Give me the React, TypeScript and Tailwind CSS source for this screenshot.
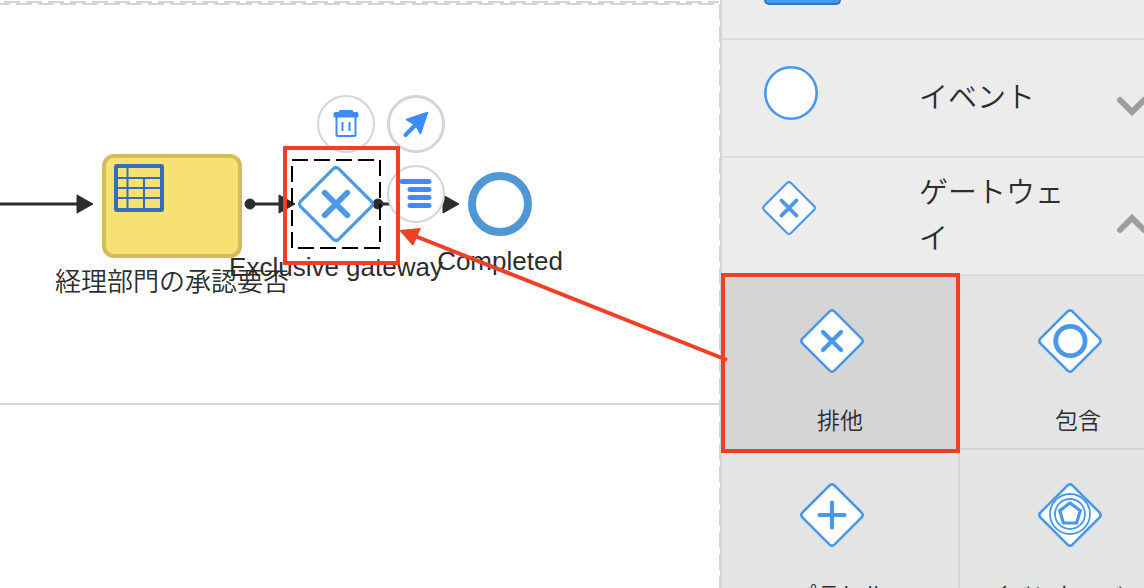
import type { ReactNode } from "react";

const BLUE = "#4a98ea";

function Diamond({ size, pad = 0, children }: { size: number; pad?: number; children?: ReactNode }) {
  return (
    <svg width={size + pad} height={size} viewBox={`0 0 ${64 * ((size + pad) / size)} 64`} fill="none" stroke={BLUE} aria-hidden="true">
      <path d="M29.6 2.4Q32 .2 34.4 2.4L61.6 29.6Q63.8 32 61.6 34.4L34.4 61.6Q32 63.8 29.6 61.6L2.4 34.4Q.2 32 2.4 29.6Z" fill="#fff" strokeWidth="2.6" />
      {children}
    </svg>
  );
}

function Cross({ reach }: { reach: number }) {
  const a = 32 - reach;
  const b = 32 + reach;
  return <path d={`M${a} ${a}L${b} ${b}M${b} ${a}L${a} ${b}`} strokeWidth="4.4" strokeLinecap="round" />;
}

function Chevron({ up = false }: { up?: boolean }) {
  return (
    <svg width="32" height="24" viewBox="0 0 32 24" fill="none" stroke="#9e9e9e" strokeWidth="6" strokeLinecap="round" aria-hidden="true">
      <path d={up ? "M4 18 16 6 28 18" : "M4 6 16 18 28 6"} />
    </svg>
  );
}

function Section({ icon, title, open }: { icon: ReactNode; title: string; open?: boolean }) {
  return (
    <button type="button" aria-expanded={!!open} className="flex h-[118px] w-[476px] items-center border-b-2 border-[#dcdcdc] bg-[#ececec] pl-10 text-left">
      <span className="w-[157px] shrink-0 pb-4">{icon}</span>
      <span className="w-[160px] shrink-0 text-[29px] leading-[46px] font-[350]">{title}</span>
      <span className="ml-[37px] shrink-0 pt-4">
        <Chevron up={open} />
      </span>
    </button>
  );
}

function Tile({ label, selected, children }: { label: string; selected?: boolean; children: ReactNode }) {
  return (
    <button
      type="button"
      className={`flex h-[174px] flex-col items-center border-r-2 border-b-2 border-[#d5d5d5] pt-[33px] ${selected ? "bg-[#d5d5d5]" : "bg-[#e4e4e4]"}`}
    >
      <Diamond size={64} pad={16}>
        {children}
      </Diamond>
      <span className="mt-8 text-[23px] leading-8 font-[350] whitespace-nowrap">{label}</span>
    </button>
  );
}

function Palette() {
  return (
    <aside aria-label="パレット" className="w-[424px] shrink-0 overflow-hidden border-l-2 border-[#d5d5d5] bg-[#e4e4e4]">
      <div className="h-10 w-[476px] border-b-2 border-[#dcdcdc] bg-[#ececec] pl-[42px]">
        <div className="h-[5px] w-[77px] rounded-b-md border-2 border-t-0 border-[#3374cb] bg-[#4a98ea]" />
      </div>
      <Section
        title="イベント"
        icon={
          <svg className="ml-[2px] block" width="54" height="60" viewBox="0 0 54 60" aria-hidden="true">
            <circle cx="27" cy="33" r="25.7" fill="#fff" stroke={BLUE} strokeWidth="2.6" />
          </svg>
        }
      />
      <Section
        title="ゲートウェイ"
        open
        icon={
          <Diamond size={54}>
            <Cross reach={9} />
          </Diamond>
        }
      />
      <div className="grid w-[476px] grid-cols-2">
        <Tile label="排他" selected>
          <Cross reach={9} />
        </Tile>
        <Tile label="包含">
          <circle cx="32.400" cy="32" r="14.700" strokeWidth="4.800" />
        </Tile>
        <Tile label="パラレル">
          <path d="M32 19.5v25M19.5 32h25" strokeWidth="4.2" strokeLinecap="round" />
        </Tile>
        <Tile label="イベント・ベース">
          <circle cx="32" cy="31" r="20" strokeWidth="1.8" />
          <circle cx="32" cy="31" r="15" strokeWidth="1.8" />
          <path d="M32 20 42.3 27.6 38.6 40H25.4L21.7 27.6Z" strokeWidth="3.2" />
        </Tile>
      </div>
    </aside>
  );
}

function Connectors() {
  return (
    <svg className="absolute inset-0 size-full" aria-hidden="true">
      <g fill="none" stroke="#d5d5d5" strokeWidth="2">
        <path d="M4 2H719" strokeDasharray="16 6" />
        <path d="M-6 4H719" strokeDasharray="16 6" />
        <path d="M0 404H720" />
      </g>
      <g stroke="#2d2d2d" strokeWidth="3">
        <path d="M0 204H80M250 204H282M378 204H446" />
      </g>
      <g fill="#2d2d2d" stroke="#2d2d2d" strokeLinejoin="round">
        <path d="M77 195v18l16-9ZM279 195v18l16-9ZM443 195v18l16-9Z" />
        <circle cx="250" cy="204" r="5" />
        <circle cx="378" cy="204" r="5" />
      </g>
    </svg>
  );
}

function NodeLabel({ className, children }: { className: string; children: ReactNode }) {
  return <span className={`absolute -translate-x-1/2 text-[26px] leading-8 whitespace-nowrap ${className}`}>{children}</span>;
}

function Diagram() {
  return (
    <section aria-label="ダイアグラム" className="relative min-w-0 flex-1 overflow-hidden bg-white">
      <Connectors />
      <svg className="absolute inset-y-0 right-0 h-full w-px" aria-hidden="true">
        <path d="M.5 4V2000" stroke="#d5d5d5" strokeWidth="1" strokeDasharray="16 6" />
      </svg>

      <div className="absolute top-[154px] left-[102px] h-[104px] w-[140px] rounded-[12px] border-4 border-[#d4bc5a] bg-[#f6e172] p-2 pt-[6px]">
        <svg width="50" height="48" viewBox="0 0 50 48" fill="none" stroke="#356eb8" aria-hidden="true">
          <rect x="2" y="2" width="46" height="44" rx="1" strokeWidth="4" />
          <path d="M13.500 3v42M30 14v31M3 14h44M3 24h44M3 34h44" strokeWidth="2" />
        </svg>
      </div>
      <NodeLabel className="top-[266px] left-[172px] font-[350]">経理部門の承認要否</NodeLabel>

      <div className="absolute top-[166px] left-[298px]">
        <Diamond size={76}>
          <path d="M22.5 22.5 41.5 41.5M41.5 22.5 22.5 41.5" strokeWidth="4.8" strokeLinecap="round" />
        </Diamond>
      </div>
      <NodeLabel className="top-[251px] left-[336px]">Exclusive gateway</NodeLabel>
      <svg className="absolute top-[159px] left-[291px]" width="90" height="90" fill="none" aria-hidden="true">
        <path d="M1 1H89V89H1Z" stroke="#000" strokeWidth="2" strokeDasharray="16 6" />
      </svg>

      <div className="absolute top-[172px] left-[468px] size-16 rounded-full border-8 border-[#5097d5] bg-white" />
      <NodeLabel className="top-[245px] left-[500px]">Completed</NodeLabel>

      <button type="button" aria-label="削除" className="absolute top-[95px] left-[317px] grid size-[58px] place-items-center rounded-full border-2 border-[#d5d5d9] bg-white">
        <svg width="26" height="28" viewBox="0 0 26 28" fill="#3d8bfb" aria-hidden="true">
          <path d="M6 1Q6 0 7 0H19Q20 0 20 1V2H23.500Q25.500 2 25.500 4V6Q25.500 7.500 24 7.500H2Q.5 7.500 .5 6V4Q.5 2 2.500 2H6Z" />
          <path d="M3.500 7V24.500Q3.500 26 5 26H21Q22.500 26 22.500 24.500V7" fill="none" stroke="#3d8bfb" strokeWidth="2" />
          <path d="M9.500 12v9M16.500 12v9" stroke="#3d8bfb" strokeWidth="2" />
        </svg>
      </button>
      <button type="button" aria-label="接続" className="absolute top-[95px] left-[387px] grid size-[58px] place-items-center rounded-full border-[3px] border-[#d5d5d5] bg-white">
        <svg width="26" height="26" viewBox="0 0 26 26" fill="#3d8bfb" stroke="#3d8bfb" strokeLinejoin="round" aria-hidden="true">
          <path d="M24.500 1.500 17.500 22.500 12.500 14 3.500 8.500Z" strokeWidth="1.500" />
          <path d="M14 12.500 2.500 24" strokeWidth="4" strokeLinecap="round" />
        </svg>
      </button>
      <button type="button" aria-label="メニュー" className="absolute top-[165px] left-[387px] grid size-[58px] place-items-center rounded-full border-2 border-[#d5d5d9] bg-white">
        <svg width="34" height="30" viewBox="0 0 34 30" stroke="#3d8bfb" strokeWidth="5" strokeLinecap="round" aria-hidden="true">
          <path d="M3 2.500H30M11 10.500H30M11 18.500H30M11 26.500H30" />
        </svg>
      </button>
    </section>
  );
}

function Annotations() {
  return (
    <div className="pointer-events-none absolute inset-0 overflow-hidden" aria-hidden="true">
      <div className="absolute top-[146px] left-[283px] h-[119px] w-[117px] border-4 border-[#ee4026]" />
      <div className="absolute top-[273px] right-[184px] h-[180px] w-[239px] border-4 border-[#ee4026]" />
      <svg className="absolute inset-0 size-full">
        <path d="M727 360 415 236" stroke="#ee4026" strokeWidth="4" />
        <path d="M399 230 421 228 413 246Z" fill="#ee4026" />
      </svg>
    </div>
  );
}

export default function App() {
  return (
    <main className="relative flex h-screen overflow-hidden bg-white font-['Liberation_Sans','Noto_Sans_CJK_JP',sans-serif] text-[#2d2d2d]">
      <Diagram />
      <Palette />
      <Annotations />
    </main>
  );
}
